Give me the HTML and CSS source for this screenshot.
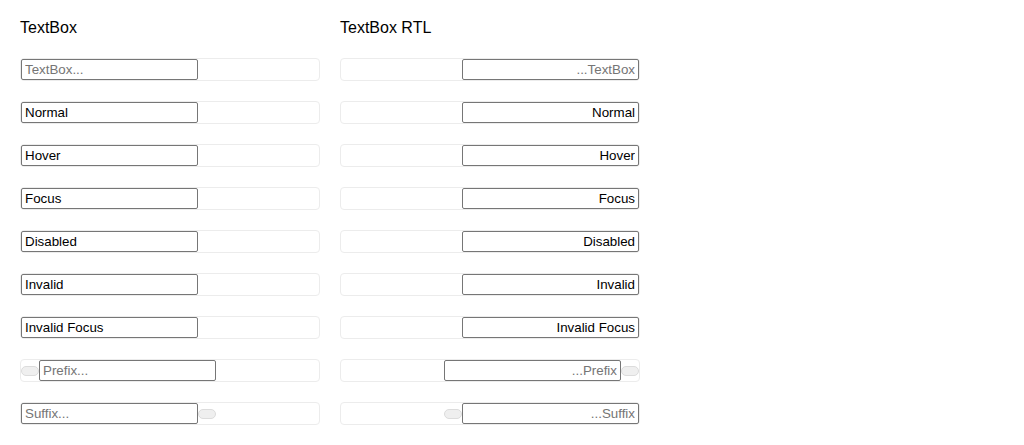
FILE: index.html
```html
<!DOCTYPE html>
<html>
<head>
<meta charset="utf-8">
<link rel="stylesheet" href="styles.css">
</head>
<body>
<div class="page">
  <section class="column">
    <h2 class="title">TextBox</h2>
    <div class="list">
      <div class="box"><input class="field" placeholder="TextBox..."></div>
      <div class="box"><input class="field" value="Normal"></div>
      <div class="box"><input class="field" value="Hover"></div>
      <div class="box"><input class="field" value="Focus"></div>
      <div class="box"><input class="field" value="Disabled"></div>
      <div class="box"><input class="field" value="Invalid"></div>
      <div class="box"><input class="field" value="Invalid Focus"></div>
      <div class="box"><span class="pill"></span><input class="field" placeholder="Prefix..."></div>
      <div class="box"><input class="field" placeholder="Suffix..."><span class="pill"></span></div>
    </div>
  </section>
  <section class="column">
    <h2 class="title">TextBox RTL</h2>
    <div class="list">
      <div class="box" dir="rtl"><input class="field" placeholder="TextBox..."></div>
      <div class="box" dir="rtl"><input class="field" value="Normal"></div>
      <div class="box" dir="rtl"><input class="field" value="Hover"></div>
      <div class="box" dir="rtl"><input class="field" value="Focus"></div>
      <div class="box" dir="rtl"><input class="field" value="Disabled"></div>
      <div class="box" dir="rtl"><input class="field" value="Invalid"></div>
      <div class="box" dir="rtl"><input class="field" value="Invalid Focus"></div>
      <div class="box" dir="rtl"><span class="pill"></span><input class="field" placeholder="Prefix..."></div>
      <div class="box" dir="rtl"><input class="field" placeholder="Suffix..."><span class="pill"></span></div>
    </div>
  </section>
</div>
</body>
</html>
```
FILE: styles.css
```css
html, body {
  margin: 0;
  padding: 0;
  background: #ffffff;
}
body {
  font-family: "Liberation Sans", Arial, sans-serif;
  color: #000;
}
.page {
  display: flex;
  gap: 20px;
  padding: 19px 20px;
}
.column {
  width: 300px;
}
.title {
  margin: 0 0 21px 0;
  font-size: 16px;
  line-height: 18px;
  font-weight: normal;
}
.list {
  display: flex;
  flex-direction: column;
  gap: 20px;
}
.box {
  display: flex;
  align-items: center;
  height: 23px;
  box-sizing: border-box;
  border: 1px solid #ececec;
  border-radius: 4px;
  background: #fff;
}
.field {
  box-sizing: border-box;
  width: 177px;
  height: 21px;
  margin: 0;
  padding: 1px 3px;
  border: 1px solid #767676;
  border-radius: 2px;
  font-family: "Liberation Sans", Arial, sans-serif;
  font-size: 13.333px;
  color: #000;
  background: #fff;
  outline: none;
}
.field::placeholder {
  color: #757575;
}
.pill {
  box-sizing: border-box;
  width: 18px;
  height: 10px;
  border: 1px solid #dcdcdc;
  border-radius: 5px;
  background: #efefef;
  flex: none;
}
```
